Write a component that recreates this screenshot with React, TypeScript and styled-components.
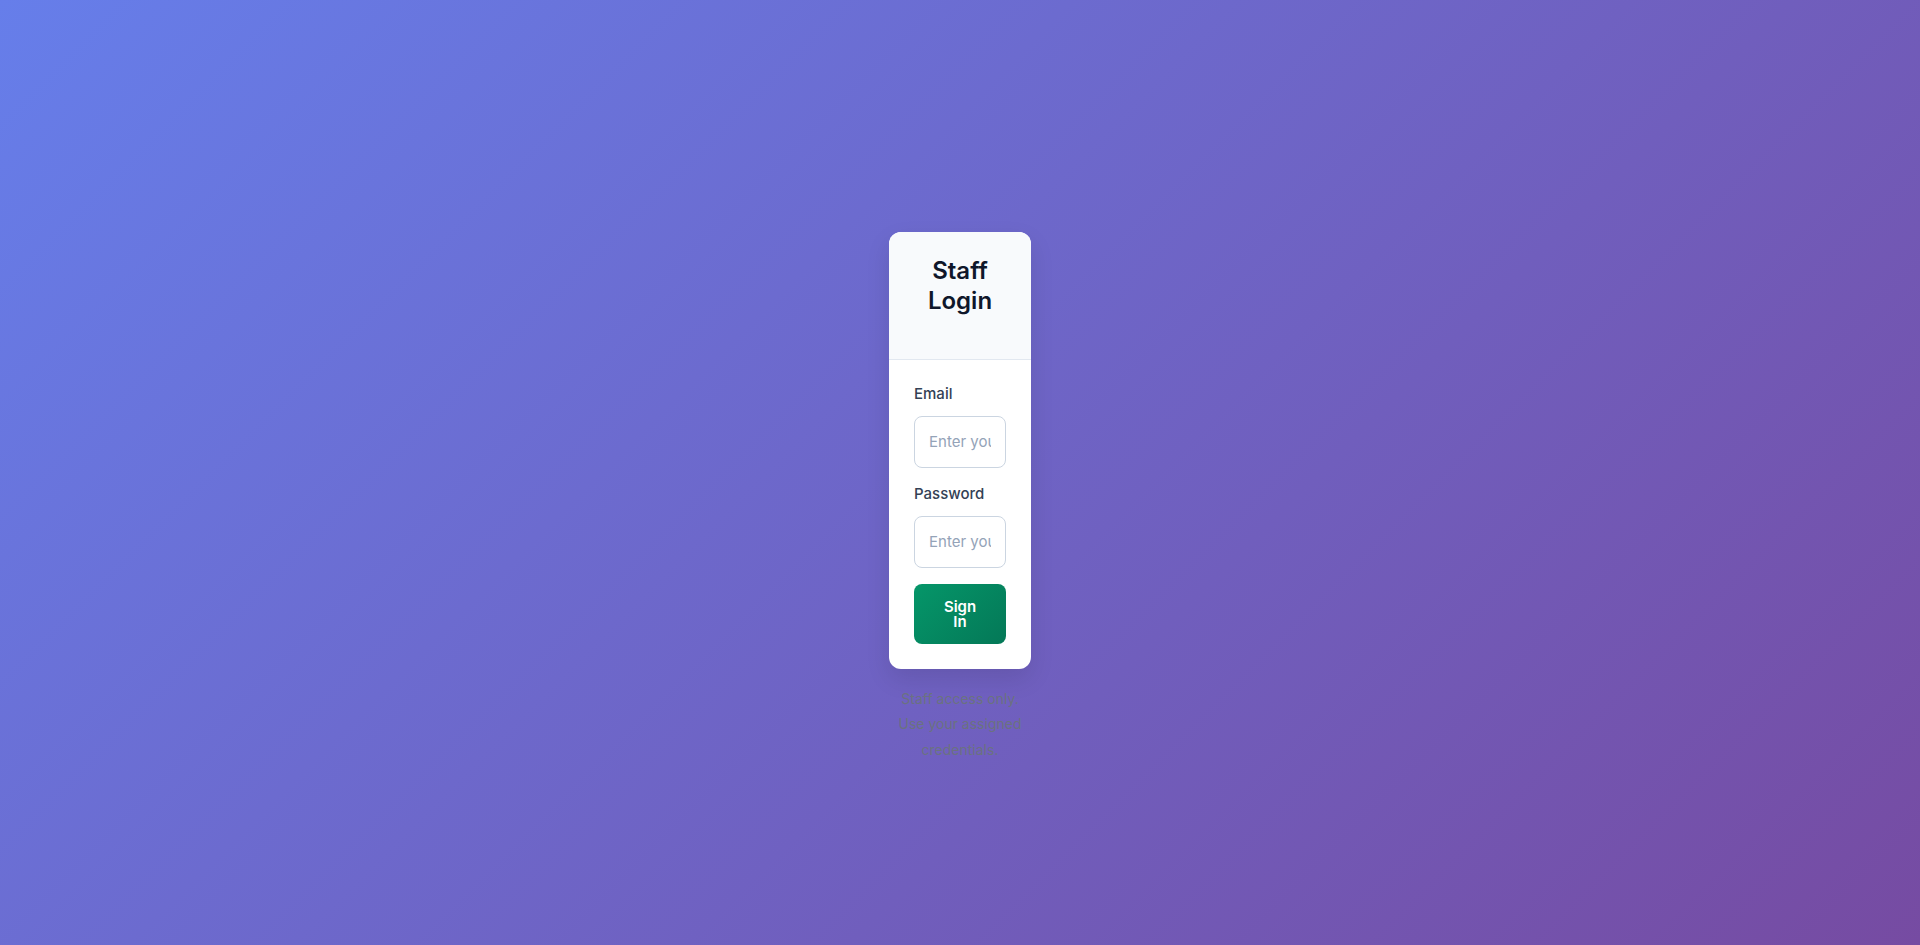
import React from 'react';
import styled, { createGlobalStyle } from 'styled-components';

const GlobalStyle = createGlobalStyle`
  html, body {
    margin: 0;
    padding: 0;
  }
  body {
    font-family: Inter, "Noto Sans", "Liberation Sans", sans-serif;
  }
  * {
    box-sizing: border-box;
  }
`;

const Page = styled.div`
  min-height: 100vh;
  display: flex;
  flex-direction: column;
  align-items: center;
  justify-content: center;
  padding-top: 49px;
  background: linear-gradient(135deg, #667eea 0%, #764ba2 100%);
`;

const Card = styled.div`
  width: 142px;
  background: #ffffff;
  border-radius: 12px;
  overflow: hidden;
  box-shadow: 0 10px 25px rgba(0, 0, 0, 0.1);
`;

const Header = styled.div`
  background: #f8fafc;
  border-bottom: 1px solid #e2e8f0;
  padding: 24px 24px 43px;
  text-align: center;
`;

const Title = styled.h1`
  margin: 0;
  font-size: 24px;
  line-height: 30px;
  font-weight: 600;
  color: #0f172a;
`;

const Form = styled.form`
  padding: 24px 25px 25px;
`;

const Field = styled.div`
  margin-bottom: 16px;
`;

const Label = styled.label`
  display: block;
  font-size: 15px;
  line-height: 20px;
  font-weight: 500;
  color: #334155;
  margin-bottom: 12px;
`;

const Input = styled.input`
  display: block;
  width: 100%;
  height: 52px;
  padding: 0 14px;
  border: 1px solid #cbd5e1;
  border-radius: 8px;
  font-family: inherit;
  font-size: 15px;
  color: #0f172a;
  background: #ffffff;
  outline: none;

  &::placeholder {
    color: #94a3b8;
  }
`;

const Button = styled.button`
  display: block;
  width: 100%;
  padding: 15px 24px;
  border: none;
  border-radius: 8px;
  background: linear-gradient(135deg, #059669 0%, #047857 100%);
  color: #ffffff;
  font-family: inherit;
  font-size: 15px;
  line-height: 15px;
  font-weight: 600;
  cursor: pointer;
`;

const Footer = styled.p`
  width: 142px;
  margin: 17px 0 0;
  text-align: center;
  font-size: 14px;
  line-height: 25.5px;
  color: #6b7280;
`;

const App = () => {
  return (
    <>
      <GlobalStyle />
      <Page>
        <Card>
          <Header>
            <Title>Staff Login</Title>
          </Header>
          <Form onSubmit={(e) => e.preventDefault()}>
            <Field>
              <Label htmlFor="email">Email</Label>
              <Input id="email" type="email" placeholder="Enter your email" />
            </Field>
            <Field>
              <Label htmlFor="password">Password</Label>
              <Input id="password" type="password" placeholder="Enter your password" />
            </Field>
            <Button type="submit">Sign In</Button>
          </Form>
        </Card>
        <Footer>Staff access only. Use your assigned credentials.</Footer>
      </Page>
    </>
  );
};

export default App;
